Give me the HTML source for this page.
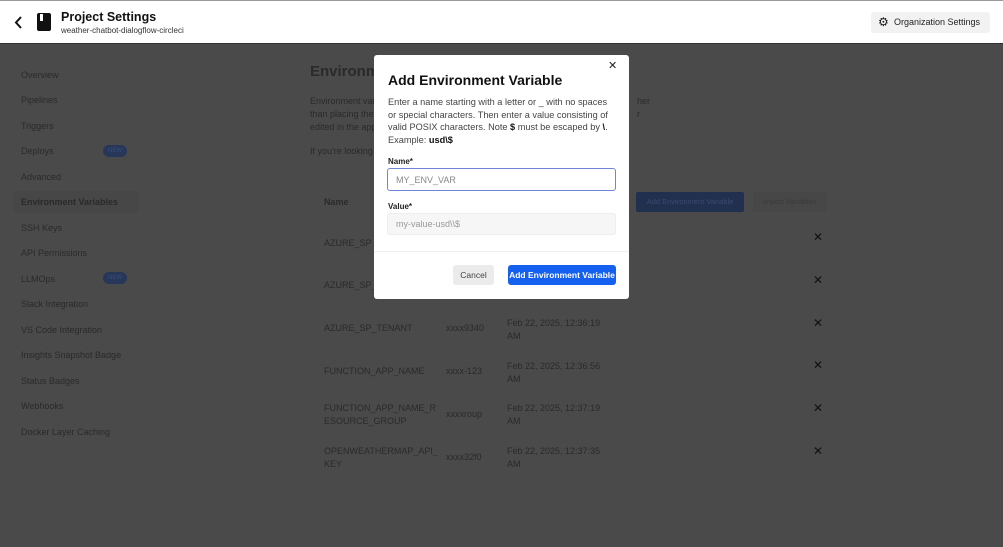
<!DOCTYPE html>
<html><head><style>
*{margin:0;padding:0;box-sizing:border-box}
body{width:1003px;height:547px;overflow:hidden;font-family:"Liberation Sans",sans-serif;background:#4a4a4a;position:relative}
.a{position:absolute;white-space:nowrap}
.hdr{position:absolute;left:0;top:0;width:1003px;height:44px;background:#fff;border-top:1px solid #999;border-bottom:1px solid #333}
.d{color:#2a2a2a;font-size:9px}
.side div{position:absolute;left:21px;font-size:9px;color:#2a2a2a}
.x{position:absolute;font-size:12px;color:#111}
.badge{position:absolute;width:24px;height:12px;border-radius:6px;background:#26375a;color:#3a4d78;font-size:6px;text-align:center;line-height:12px}
</style></head><body>
<div class="hdr">
<svg class="a" style="left:14px;top:15px" width="10" height="13" viewBox="0 0 10 13"><path d="M7 1L2 6.5L7 12" stroke="#111" stroke-width="2" fill="none"/></svg>
<div class="a" style="left:37px;top:12px;width:14px;height:18px;background:#111;border-radius:2px"></div>
<div class="a" style="left:40px;top:13px;width:3px;height:7px;background:#fff"></div>
<div class="a" style="left:61px;top:9px;font-size:12.5px;font-weight:bold;color:#111">Project Settings</div>
<div class="a" style="left:61px;top:25px;font-size:8px;color:#333">weather-chatbot-dialogflow-circleci</div>
<div class="a" style="left:871px;top:11px;width:119px;height:21px;background:#f2f2f2;border-radius:3px"></div>
<div class="a" style="left:878px;top:14px;font-size:12px;color:#111">⚙</div>
<div class="a" style="left:894px;top:16px;font-size:9px;color:#222">Organization Settings</div>
</div>
<div class="a" style="left:14px;top:191px;width:124px;height:22px;background:#474747"></div>
<div class="side">
<div style="top:70px">Overview</div><div style="top:95px">Pipelines</div><div style="top:121px">Triggers</div>
<div style="top:146px">Deploys</div><div style="top:172px">Advanced</div>
<div style="top:197px;font-weight:bold">Environment Variables</div><div style="top:223px">SSH Keys</div>
<div style="top:248px">API Permissions</div><div style="top:274px">LLMOps</div>
<div style="top:299px">Slack Integration</div><div style="top:325px">VS Code Integration</div>
<div style="top:350px">Insights Snapshot Badge</div><div style="top:376px">Status Badges</div>
<div style="top:401px">Webhooks</div><div style="top:427px">Docker Layer Caching</div>
</div>
<div class="badge" style="left:103px;top:145px">NEW</div>
<div class="badge" style="left:103px;top:272px">NEW</div>
<div class="a" style="left:310px;top:63px;font-size:15px;font-weight:bold;color:#2a2a2a">Environment Variables</div>
<div class="a d" style="left:310px;top:95px;line-height:13px">Environment variables<br>than placing them<br>edited in the app</div>
<div class="a d" style="left:637px;top:95px;line-height:13px">her<br>r</div>
<div class="a d" style="left:310px;top:146px">If you're looking</div>
<div class="a d" style="left:324px;top:197px;font-weight:bold">Name</div>
<div class="a" style="left:636px;top:192px;width:108px;height:20px;background:#22304f;border-radius:2px;color:#3a4a70;font-size:7.5px;text-align:center;line-height:20px">Add Environment Variable</div>
<div class="a" style="left:753px;top:192px;width:73px;height:20px;background:#474747;border-radius:2px;color:#3a3a3a;font-size:7.5px;text-align:center;line-height:20px">Import Variables</div>
<div class="a d" style="left:324px;top:238px">AZURE_SP</div>
<div class="a d" style="left:324px;top:280px">AZURE_SP_</div>
<div class="a d" style="left:324px;top:323px">AZURE_SP_TENANT</div><div class="a d" style="left:446px;top:323px">xxxx9340</div><div class="a d" style="left:507px;top:317px;line-height:13px">Feb 22, 2025, 12:36:19<br>AM</div>
<div class="a d" style="left:324px;top:366px">FUNCTION_APP_NAME</div><div class="a d" style="left:446px;top:366px">xxxx-123</div><div class="a d" style="left:507px;top:360px;line-height:13px">Feb 22, 2025, 12:36:56<br>AM</div>
<div class="a d" style="left:324px;top:402px;line-height:13px">FUNCTION_APP_NAME_R<br>ESOURCE_GROUP</div><div class="a d" style="left:446px;top:409px">xxxxroup</div><div class="a d" style="left:507px;top:402px;line-height:13px">Feb 22, 2025, 12:37:19<br>AM</div>
<div class="a d" style="left:324px;top:445px;line-height:13px">OPENWEATHERMAP_API_<br>KEY</div><div class="a d" style="left:446px;top:452px">xxxx32f0</div><div class="a d" style="left:507px;top:445px;line-height:13px">Feb 22, 2025, 12:37:35<br>AM</div>
<div class="x" style="left:813px;top:230px">✕</div><div class="x" style="left:813px;top:273px">✕</div>
<div class="x" style="left:813px;top:316px">✕</div><div class="x" style="left:813px;top:358px">✕</div>
<div class="x" style="left:813px;top:401px">✕</div><div class="x" style="left:813px;top:444px">✕</div>

<div class="a" style="left:374px;top:55px;width:255px;height:244px;background:#fff;border-radius:3px"></div>
<div class="a" style="left:608px;top:59px;font-size:11px;color:#222">✕</div>
<div class="a" style="left:388px;top:72px;font-size:14px;font-weight:bold;color:#111">Add Environment Variable</div>
<div class="a" style="left:388px;top:96px;font-size:9.2px;line-height:12.6px;color:#444">Enter a name starting with a letter or _ with no spaces<br>or special characters. Then enter a value consisting of<br>valid POSIX characters. Note <b style="color:#111">$</b> must be escaped by <b style="color:#111">\</b>.<br>Example: <b style="color:#111">usd\$</b></div>
<div class="a" style="left:388px;top:157px;font-size:8px;font-weight:bold;color:#222">Name*</div>
<div class="a" style="left:387px;top:168px;width:229px;height:23px;border:1.5px solid #6d86d8;border-radius:3px;background:#fff"></div>
<div class="a" style="left:396px;top:175px;font-size:9px;color:#888">MY_ENV_VAR</div>
<div class="a" style="left:388px;top:202px;font-size:8px;font-weight:bold;color:#222">Value*</div>
<div class="a" style="left:387px;top:213px;width:229px;height:22px;border:1px solid #eee;border-radius:3px;background:#f6f6f6"></div>
<div class="a" style="left:396px;top:219px;font-size:9px;color:#999">my-value-usd\\$</div>
<div class="a" style="left:374px;top:251px;width:255px;height:1px;background:#eee"></div>
<div class="a" style="left:453px;top:265px;width:41px;height:20px;background:#ebebeb;border-radius:3px;font-size:8.5px;color:#444;text-align:center;line-height:20px">Cancel</div>
<div class="a" style="left:508px;top:265px;width:108px;height:20px;background:#1660f0;border-radius:3px;font-size:8.5px;color:#fff;font-weight:bold;text-align:center;line-height:20px">Add Environment Variable</div>
</body></html>
